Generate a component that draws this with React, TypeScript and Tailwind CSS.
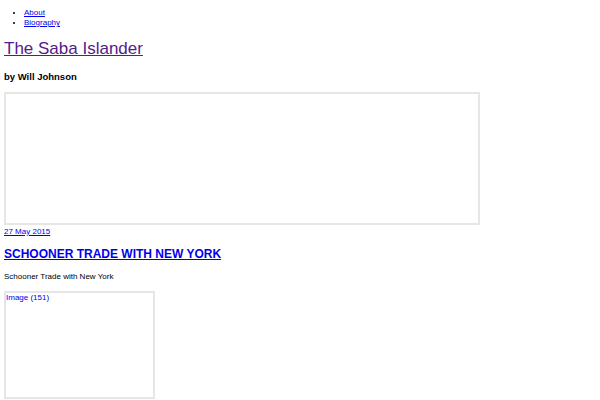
const NAV_LINKS = [
  { href: "#about", label: "About" },
  { href: "#biography", label: "Biography" },
];

export default function App() {
  return (
    <div className="min-h-[400px] bg-white px-[4px] text-black font-['Liberation_Sans',Arial,sans-serif]">
      <ul className="list-disc pl-[20px] pt-[8px] text-[8px] leading-[10px]">
        {NAV_LINKS.map((link) => (
          <li key={link.label}>
            <a href={link.href} className="text-[#0000ee] underline">
              {link.label}
            </a>
          </li>
        ))}
      </ul>

      <h1 className="mt-[11px] text-[17px] leading-[20px]">
        <a href="#home" className="text-[#551a8b] underline">
          The Saba Islander
        </a>
      </h1>

      <h3 className="mt-[12px] text-[9.5px] leading-[11px] font-bold">by Will Johnson</h3>

      {/* header image placeholder */}
      <div className="mt-[10px] h-[133px] w-[476px] border-2 border-[#e6e6e6]" />

      <a href="#post" className="mt-[2px] block w-fit text-[8px] leading-[10px] text-[#0000ee] underline">
        27 May 2015
      </a>

      <h2 className="mt-[10px] text-[12px] leading-[14px] font-bold">
        <a href="#post" className="text-[#0000ee] underline">
          SCHOONER TRADE WITH NEW YORK
        </a>
      </h2>

      <p className="mt-[11px] text-[8px] leading-[10px]">Schooner Trade with New York</p>

      <a href="#image" className="mt-[9px] block h-[108px] w-[151px] border-2 border-[#e6e6e6] text-[8px] leading-[10px] text-[#0000ee]">
        Image (151)
      </a>
    </div>
  );
}
